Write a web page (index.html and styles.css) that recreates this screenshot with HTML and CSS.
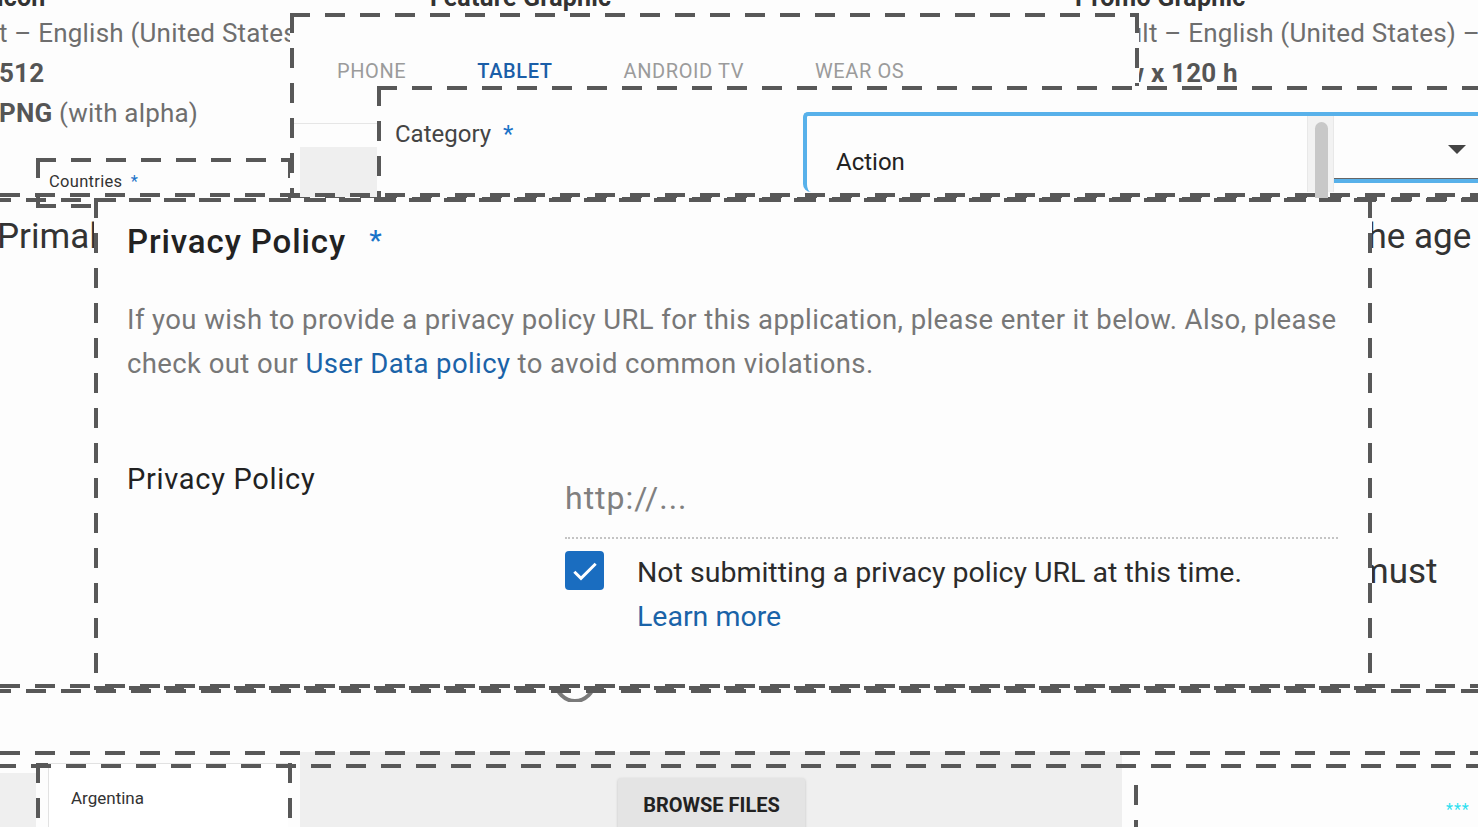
FILE: index.html
```html
<!DOCTYPE html>
<html>
  <head>
    <meta charset="UTF-8">
    <title>Store listing – Privacy Policy</title>
    <link rel="stylesheet" href="styles.css">
  </head>
  <body>
    <div class="canvas">

      <!-- fragments of the listing page behind the frames -->
      <div class="frag frag-titles">
        <span class="t-icon">Hi-res icon</span>
        <span class="t-feature">Feature Graphic</span>
        <span class="t-promo">Promo Graphic</span>
      </div>
      <div class="frag frag-left">
        <p>t – English (United States)</p>
        <p class="strong">512</p>
        <p><b>PNG</b> (with alpha)</p>
      </div>
      <div class="frag frag-right">
        <p>Default – English (United States) – </p>
        <p class="strong">180 w x 120 h</p>
      </div>
      <div class="frag frag-primal">Primal</div>
      <div class="frag frag-age">the age</div>
      <div class="frag frag-must">must</div>

      <!-- device tabs -->
      <div class="frame panel-tabs">
        <div class="tabs">
          <span class="tab">Phone</span>
          <span class="tab active">Tablet</span>
          <span class="tab">Android TV</span>
          <span class="tab">Wear OS</span>
        </div>
        <div class="tabs-rule"></div>
        <div class="tabs-thumb"></div>
      </div>

      <div class="frame panel-countries">
        <span class="small-label">Countries <span class="req">*</span></span>
      </div>

      <!-- category select -->
      <div class="frame panel-category">
        <div class="cat-label">Category <span class="req">*</span></div>
        <div class="select">
          <div class="select-list">Action</div>
          <div class="scroll"><div class="scroll-thumb"></div></div>
          <div class="select-field"><span class="caret"></span></div>
        </div>
      </div>

      <div class="rule" style="top: 193px"></div>
      <div class="rule shift" style="top: 198px"></div>

      <!-- privacy policy -->
      <div class="frame panel-privacy">
        <h2 class="pp-title">Privacy Policy <span class="req">*</span></h2>
        <p class="pp-text">If you wish to provide a privacy policy URL for this application, please enter it below. Also, please check out our <a href="#">User Data policy</a> to avoid common violations.</p>
        <div class="pp-row">
          <div class="pp-label">Privacy Policy</div>
          <div class="pp-field">
            <div class="pp-input">http://...</div>
            <div class="pp-check">
              <span class="checkbox">
                <svg width="32" height="32" viewBox="0 0 24 24"><path d="M4 12.5l5 5L20 6.5" fill="none" stroke="#fff" stroke-width="2.2"/></svg>
              </span>
              <div class="pp-check-text">
                Not submitting a privacy policy URL at this time.
                <a href="#">Learn more</a>
              </div>
            </div>
          </div>
        </div>
      </div>

      <svg class="spinner" width="44" height="30" viewBox="0 0 44 30">
        <path d="M3 10 A19 19 0 0 0 41 10" fill="none" stroke="#7a7a7a" stroke-width="4"/>
      </svg>

      <div class="rule" style="top: 684px"></div>
      <div class="rule shift" style="top: 689px"></div>

      <!-- bottom: countries list and upload tray -->
      <div class="tray">
        <button class="browse" type="button">BROWSE FILES</button>
      </div>
      <div class="tray-left"></div>
      <div class="frame panel-list">
        <div class="list-item">Argentina</div>
      </div>
      <div class="rule" style="top: 751px"></div>
      <div class="rule shift2" style="top: 764px"></div>
      <div class="dash-v" style="left: 1134px; top: 785px"></div>

      <span class="stars">***</span>
    </div>
  </body>
</html>
```

FILE: styles.css
```css
* {
  box-sizing: border-box;
}
:root {
  --dash: repeating-linear-gradient(90deg, #585858 0 20px, transparent 20px 35px);
  --dash-v: repeating-linear-gradient(180deg, #585858 0 20px, transparent 20px 35px);
}
body {
  margin: 0;
  font-family: Roboto, "Noto Sans", sans-serif;
  color: #333;
  background: #fdfdfd;
}
p {
  margin: 0;
}
a {
  color: #1a63a8;
  text-decoration: none;
}
.canvas {
  position: relative;
  width: 1478px;
  height: 827px;
  overflow: hidden;
  background: #fdfdfd;
}

/* dashed frames */
.frame {
  position: absolute;
  background-color: #fdfdfd;
  background-image: var(--dash), var(--dash), var(--dash-v), var(--dash-v);
  background-size: 100% 4px, 100% 4px, 4px 100%, 4px 100%;
  background-position: 0 0, 0 100%, 0 0, 100% 0;
  background-repeat: no-repeat;
}
.rule {
  position: absolute;
  left: 0;
  width: 1500px;
  height: 4px;
  background: var(--dash);
  z-index: 6;
}
.rule.shift {
  left: -9px;
}
.rule.shift2 {
  left: -4px;
}
.dash-v {
  position: absolute;
  width: 4px;
  height: 60px;
  background: var(--dash-v);
}

/* fragments */
.frag {
  position: absolute;
  color: #6e6e6e;
  font-size: 26px;
  letter-spacing: 0.2px;
  white-space: nowrap;
}
.frag p {
  line-height: 40px;
}
.frag .strong,
.frag b {
  font-weight: 700;
  color: #555;
}
.frag-titles {
  top: -17px;
  left: 0;
  width: 100%;
  height: 30px;
  font-weight: 700;
  font-size: 25px;
  color: #333;
}
.frag-titles span {
  position: absolute;
  top: 0;
}
.t-icon { left: -80px; }
.t-feature { left: 430px; }
.t-promo { left: 1075px; }
.frag-left {
  top: 13px;
  left: -1px;
}
.frag-right {
  top: 13px;
  left: 1073px;
}
.frag-primal,
.frag-age,
.frag-must {
  font-size: 35px;
  color: #333;
  letter-spacing: 0;
}
.frag-primal { top: 216px; left: -3px; }
.frag-age { top: 216px; left: 1356px; }
.frag-must { top: 551px; left: 1358px; }

/* tabs panel */
.panel-tabs {
  left: 290px;
  top: 13px;
  width: 849px;
  height: 186px;
  padding: 46px 4px 0;
  z-index: 2;
}
.tabs {
  display: flex;
  gap: 71px;
  padding-left: 43px;
}
.tab {
  font-size: 20px;
  line-height: 24px;
  letter-spacing: 0.6px;
  text-transform: uppercase;
  color: #9b9b9b;
}
.tab.active {
  color: #1a5ea8;
  font-weight: 500;
}
.tabs-rule {
  margin-top: 40px;
  width: 90px;
  height: 1px;
  background: #e6e6e6;
}
.tabs-thumb {
  margin: 23px 0 0 6px;
  width: 80px;
  height: 50px;
  background: #efefef;
}

.panel-countries {
  left: 36px;
  top: 158px;
  width: 256px;
  height: 50px;
  padding: 14px 0 0 13px;
  z-index: 1;
}
.small-label {
  font-size: 16.5px;
  line-height: 20px;
  letter-spacing: 0.3px;
  color: #333;
}
.small-label .req {
  margin-left: 4px;
}
.req {
  color: #1a73c8;
}

/* category panel */
.panel-category {
  left: 377px;
  top: 86px;
  width: 1200px;
  height: 115px;
  display: flex;
  padding: 26px 0 0 18px;
  z-index: 3;
}
.cat-label {
  width: 408px;
  margin-top: 7px;
  font-size: 24px;
  line-height: 30px;
  color: #444;
}
.cat-label .req {
  margin-left: 6px;
}
.select {
  flex: 1;
  display: flex;
  height: 80px;
  border-top: 4px solid #58b1ea;
  border-left: 4px solid #58b1ea;
  border-top-left-radius: 5px;
  border-bottom-left-radius: 8px;
}
.select-list {
  width: 500px;
  padding: 31px 0 0 29px;
  font-size: 24px;
  line-height: 30px;
  color: #222;
}
.scroll {
  width: 27px;
  padding: 6px 0 0 7px;
  background: #f2f2f2;
  border-left: 1px solid #e8e8e8;
  border-right: 1px solid #e8e8e8;
}
.scroll-thumb {
  width: 13px;
  height: 100px;
  border-radius: 7px 7px 0 0;
  background: #c8c8c8;
}
.select-field {
  flex: 1;
  height: 67px;
  padding: 29px 0 0 114px;
  border-bottom: 4px solid #58b1ea;
  box-shadow: inset 0 -1px 0 #666;
}
.caret {
  display: block;
  width: 0;
  height: 0;
  border-left: 9px solid transparent;
  border-right: 9px solid transparent;
  border-top: 9px solid #444;
}

/* privacy policy panel */
.panel-privacy {
  left: 94px;
  top: 198px;
  width: 1278px;
  height: 492px;
  padding: 23px 0 0 33px;
  z-index: 5;
}
.pp-title {
  margin: 0;
  font-size: 33px;
  line-height: 40px;
  font-weight: 500;
  letter-spacing: 0.9px;
  color: #222;
}
.pp-title .req {
  margin-left: 14px;
  font-size: 28px;
  vertical-align: 3px;
}
.pp-text {
  margin-top: 36px;
  max-width: 1222px;
  font-size: 27.5px;
  line-height: 44px;
  letter-spacing: 0.4px;
  color: #777;
}
.pp-row {
  display: flex;
  margin-top: 73px;
}
.pp-label {
  width: 438px;
  font-size: 29px;
  line-height: 40px;
  letter-spacing: 0.7px;
  color: #222;
}
.pp-field {
  width: 773px;
}
.pp-input {
  padding: 17px 0 17px;
  font-size: 32px;
  line-height: 44px;
  letter-spacing: 1px;
  color: #808080;
  border-bottom: 2px dotted #c4c4c4;
}
.pp-check {
  display: flex;
  margin-top: 12px;
}
.checkbox {
  display: flex;
  align-items: center;
  justify-content: center;
  flex: none;
  width: 39px;
  height: 39px;
  margin-right: 33px;
  border-radius: 4px;
  background: #1a6dc0;
}
.pp-check-text {
  font-size: 28.5px;
  line-height: 44px;
  color: #2b2b2b;
}
.pp-check-text a {
  display: block;
}
.spinner {
  position: absolute;
  left: 553px;
  top: 672px;
  z-index: 4;
}

/* bottom */
.tray {
  position: absolute;
  left: 300px;
  top: 752px;
  width: 822px;
  height: 80px;
  padding: 26px 0 0 318px;
  background: #efefef;
}
.tray-left {
  position: absolute;
  left: 0;
  top: 773px;
  width: 36px;
  height: 60px;
  background: #efefef;
}
.browse {
  width: 187px;
  height: 60px;
  padding: 0 0 6px;
  border: none;
  border-radius: 3px;
  background: #e4e4e4;
  box-shadow: 0 1px 3px rgba(0, 0, 0, 0.2);
  font-family: Roboto, sans-serif;
  font-size: 20px;
  font-weight: 700;
  line-height: 24px;
  color: #222;
  text-align: center;
}
.panel-list {
  left: 36px;
  top: 763px;
  width: 256px;
  height: 120px;
  padding: 0 4px 0 12px;
  background-color: transparent;
}
.list-item {
  height: 100%;
  padding: 24px 0 0 22px;
  background: #fff;
  border-top: 1px solid #e2e2e2;
  border-left: 1px solid #e2e2e2;
  font-size: 17px;
  line-height: 20px;
  color: #333;
}
.stars {
  position: absolute;
  left: 1446px;
  top: 800px;
  font-size: 16px;
  letter-spacing: 1px;
  color: #2de0f0;
}
```
